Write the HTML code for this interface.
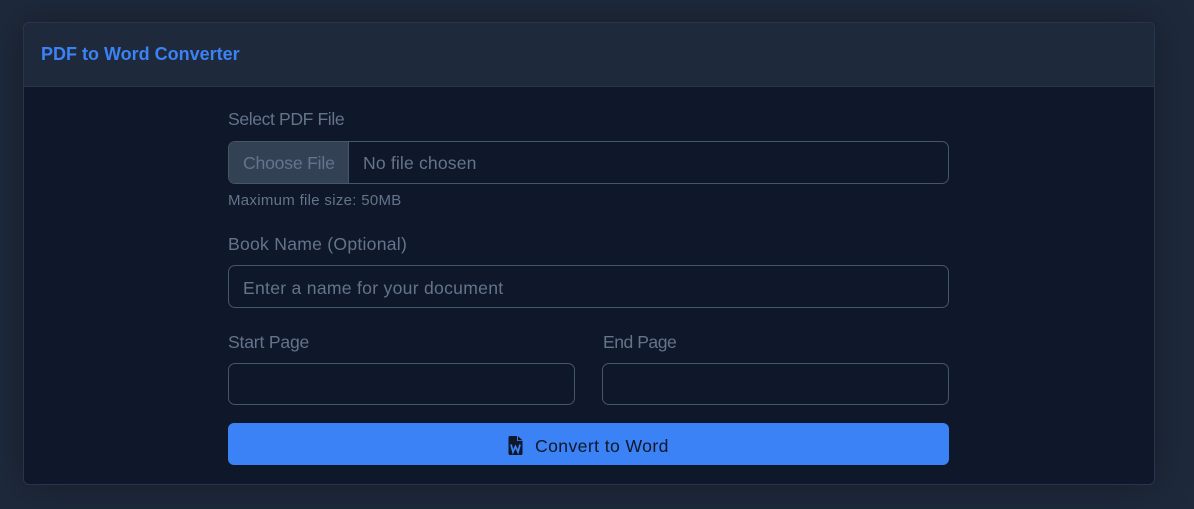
<!DOCTYPE html>
<html>
<head>
<meta charset="utf-8">
<style>
html,body{margin:0;padding:0;width:1194px;height:509px;overflow:hidden;background:#1e293b;font-family:"Liberation Sans",sans-serif;}
div,span{position:absolute;box-sizing:border-box;white-space:nowrap;}
.card{left:23px;top:22px;width:1132px;height:463px;background:#0f172a;border:1px solid #2a3648;border-radius:6px;box-shadow:0 0 40px rgba(0,0,0,.3);overflow:hidden;}
.head{left:0;top:0;width:1130px;height:64px;background:#1e293b;border-bottom:1px solid #2a3648;}
.title{left:41px;top:44px;font-size:18px;line-height:21px;font-weight:bold;color:#3b82f6;}
.lbl{font-size:17.6px;line-height:22px;color:#64748b;}
.box{border:1px solid #475569;border-radius:7px;background:#0f172a;}
.ph{font-size:17.6px;line-height:22px;color:#64748b;}
</style>
</head>
<body>
<div class="card"><div class="head"></div></div>
<div class="title">PDF to Word Converter</div>

<div class="lbl" style="left:228px;top:108px;letter-spacing:-.4px;">Select PDF File</div>
<div class="box" style="left:228px;top:141px;width:721px;height:43px;"></div>
<div style="left:229px;top:142px;width:120px;height:41px;background:#334155;border-right:1px solid #475569;border-radius:6px 0 0 6px;"></div>
<div class="ph" style="left:243px;top:152px;letter-spacing:-.2px;">Choose File</div>
<div class="ph" style="left:363px;top:152px;letter-spacing:.15px;">No file chosen</div>
<div style="left:228px;top:191px;font-size:15px;line-height:20px;color:#64748b;letter-spacing:.3px;">Maximum file size: 50MB</div>

<div class="lbl" style="left:228px;top:233px;letter-spacing:.25px;">Book Name (Optional)</div>
<div class="box" style="left:228px;top:265px;width:721px;height:43px;"></div>
<div class="ph" style="left:243px;top:277px;letter-spacing:.27px;">Enter a name for your document</div>

<div class="lbl" style="left:228px;top:331px;letter-spacing:-.2px;">Start Page</div>
<div class="box" style="left:228px;top:363px;width:347px;height:42px;"></div>
<div class="lbl" style="left:603px;top:331px;letter-spacing:-.5px;">End Page</div>
<div class="box" style="left:602px;top:363px;width:347px;height:42px;"></div>

<div style="left:228px;top:423px;width:721px;height:42px;background:#3b82f6;border-radius:6px;"></div>
<svg style="position:absolute;left:508px;top:436px;" width="15" height="19" viewBox="0 0 15 19">
<path d="M2 0H9V5H14.5V17.5Q14.5 19 13 19H2Q0.5 19 0.5 17.5V1.5Q0.5 0 2 0Z" fill="#0f172a"/>
<path d="M10 0.2L14.5 4.2H10Z" fill="#0f172a"/>
<path d="M3 8.5L5 16L7.5 10.5L10 16L12 8.5" fill="none" stroke="#3b82f6" stroke-width="1.8"/>
</svg>
<div style="left:535px;top:435px;font-size:17.6px;line-height:22px;color:#0f172a;letter-spacing:.4px;">Convert to Word</div>
</body>
</html>
